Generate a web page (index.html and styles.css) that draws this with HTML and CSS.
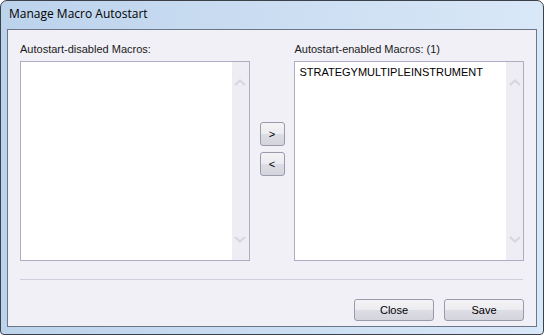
FILE: index.html
```html
<!DOCTYPE html>
<html lang="en">
<head>
    <meta charset="UTF-8">
    <title>Manage Macro Autostart</title>
    <link rel="stylesheet" href="styles.css">
</head>
<body>
    <div class="window">
        <div class="titlebar">Manage Macro Autostart</div>
        <div class="client">
            <div class="lists">
                <div class="column">
                    <div class="label">Autostart-disabled Macros:</div>
                    <div class="listbox">
                        <div class="items"></div>
                        <div class="scroll">
                            <svg width="12" height="7" viewBox="0 0 12 7"><path d="M1 6 L6 1.5 L11 6" fill="none" stroke="#d6d6e0" stroke-width="2.2"/></svg>
                            <svg width="12" height="7" viewBox="0 0 12 7"><path d="M1 1 L6 5.5 L11 1" fill="none" stroke="#d6d6e0" stroke-width="2.2"/></svg>
                        </div>
                    </div>
                </div>
                <div class="movers">
                    <button class="move">&gt;</button>
                    <button class="move">&lt;</button>
                </div>
                <div class="column">
                    <div class="label">Autostart-enabled Macros: (1)</div>
                    <div class="listbox">
                        <div class="items">
                            <div class="item">STRATEGYMULTIPLEINSTRUMENT</div>
                        </div>
                        <div class="scroll">
                            <svg width="12" height="7" viewBox="0 0 12 7"><path d="M1 6 L6 1.5 L11 6" fill="none" stroke="#d6d6e0" stroke-width="2.2"/></svg>
                            <svg width="12" height="7" viewBox="0 0 12 7"><path d="M1 1 L6 5.5 L11 1" fill="none" stroke="#d6d6e0" stroke-width="2.2"/></svg>
                        </div>
                    </div>
                </div>
            </div>
            <div class="separator"></div>
            <div class="actions">
                <button class="action">Close</button>
                <button class="action">Save</button>
            </div>
        </div>
    </div>
</body>
</html>
```

FILE: styles.css
```css
body {
    margin: 0;
    background-color: #fff;
    font-family: "Liberation Sans", Arial, sans-serif;
    font-size: 11px;
    color: #000;
}
.window {
    width: 544px;
    height: 335px;
    box-sizing: border-box;
    border: 1px solid #3c4048;
    border-radius: 7px 7px 4px 4px;
    background: linear-gradient(90deg, #bcd3ec 0%, #c9dcf1 45%, #d9e8f8 100%);
    padding: 0 6px 7px 6px;
    display: flex;
    flex-direction: column;
}
.titlebar {
    height: 28px;
    line-height: 26px;
    padding-left: 2px;
    font-family: "Open Sans", "Liberation Sans", sans-serif;
    font-size: 12px;
    color: #000;
}
.client {
    flex: 1;
    background-color: #f1f0f6;
    border: 1px solid #6b7688;
    padding: 12px 12px 0 12px;
    display: flex;
    flex-direction: column;
}
.lists {
    display: flex;
}
.column {
    width: 230px;
}
.label {
    height: 13px;
    line-height: 13px;
    margin-top: 1px;
    margin-bottom: 5px;
    color: #1a1a1a;
}
.listbox {
    height: 198px;
    border: 1px solid #abadc3;
    background-color: #fff;
    display: flex;
}
.items {
    flex: 1;
    padding: 4px 4px;
}
.item {
    line-height: 13px;
}
.scroll {
    width: 17px;
    background-color: #eeedf3;
    display: flex;
    flex-direction: column;
    justify-content: space-between;
    align-items: center;
    padding: 17px 0 17px 0;
}
.movers {
    width: 45px;
    display: flex;
    flex-direction: column;
    align-items: center;
    gap: 6px;
    padding-top: 80px;
}
button {
    font-family: "Liberation Sans", Arial, sans-serif;
    font-size: 11px;
    color: #000;
    border: 1px solid #9a9aac;
    border-radius: 3px;
    background: linear-gradient(#f4f4f7 0%, #ececf0 50%, #dddde5 51%, #d4d4dc 100%);
    padding: 0;
}
.move {
    width: 25px;
    height: 24px;
}
.separator {
    height: 1px;
    background-color: #cfcedd;
    margin: 18px 1px 0 0;
}
.actions {
    display: flex;
    justify-content: flex-end;
    gap: 10px;
    margin-top: 19px;
}
.action {
    width: 80px;
    height: 22px;
}
```
